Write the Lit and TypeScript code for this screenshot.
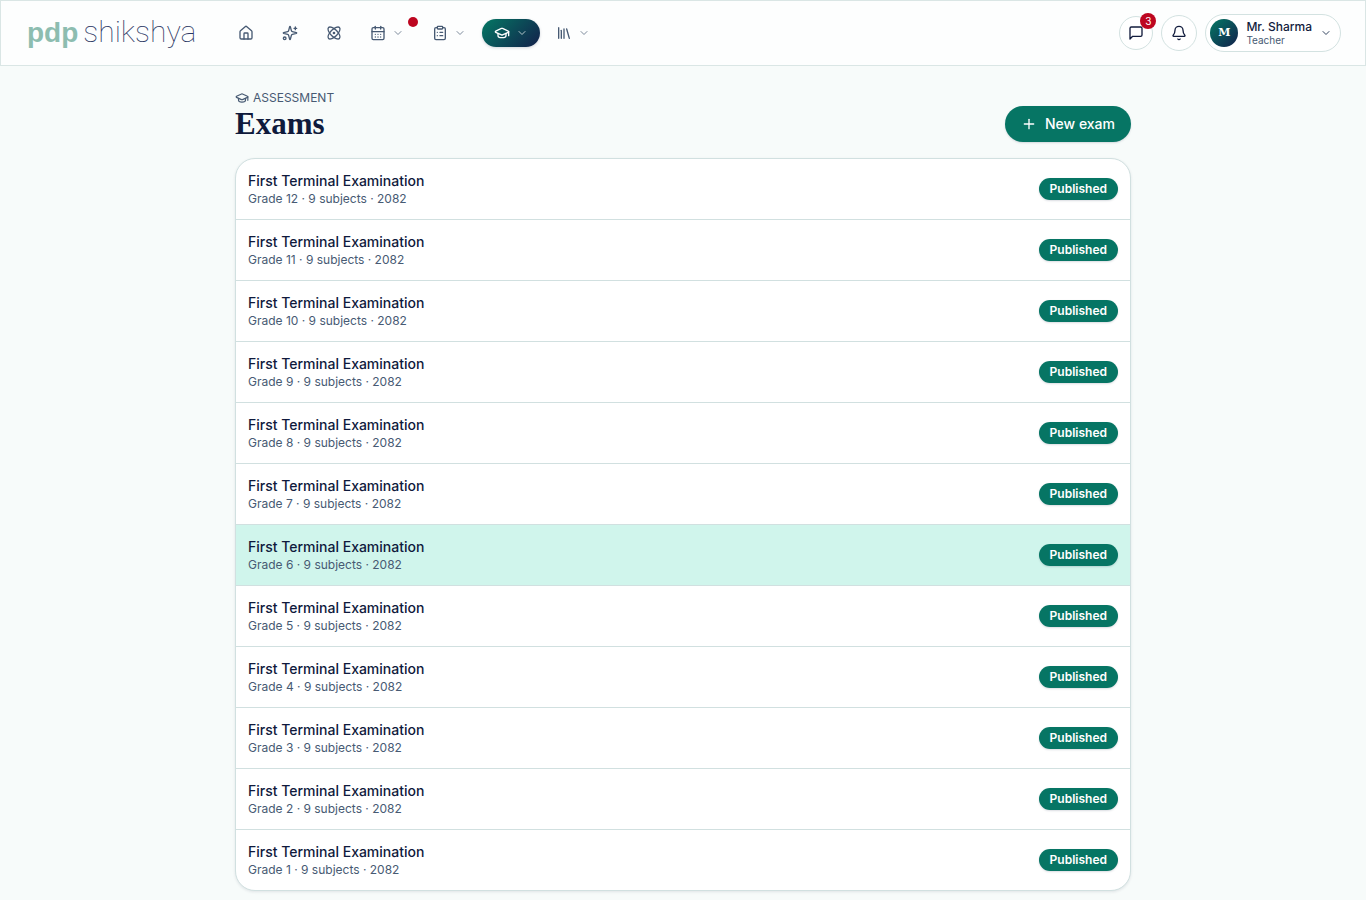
import { LitElement, html, css, svg, nothing, TemplateResult } from "lit";
import { customElement, property } from "lit/decorators.js";

const icons: Record<string, TemplateResult> = {
  home: svg`<path d="M15 21v-8a1 1 0 0 0-1-1h-4a1 1 0 0 0-1 1v8"/><path d="M3 10a2 2 0 0 1 .709-1.528l7-5.999a2 2 0 0 1 2.582 0l7 5.999A2 2 0 0 1 21 10v9a2 2 0 0 1-2 2H5a2 2 0 0 1-2-2z"/>`,
  sparkles: svg`<path d="M9.937 15.5A2 2 0 0 0 8.5 14.063l-6.135-1.582a.5.5 0 0 1 0-.962L8.5 9.936A2 2 0 0 0 9.937 8.5l1.582-6.135a.5.5 0 0 1 .963 0L14.063 8.5A2 2 0 0 0 15.5 9.937l6.135 1.581a.5.5 0 0 1 0 .964L15.5 14.063a2 2 0 0 0-1.437 1.437l-1.582 6.135a.5.5 0 0 1-.963 0z"/><path d="M20 3v4"/><path d="M22 5h-4"/><circle cx="4" cy="20" r="2"/>`,
  atom: svg`<circle cx="12" cy="12" r="1"/><path d="M20.2 20.2c2.04-2.03.02-7.36-4.5-11.9-4.54-4.52-9.87-6.54-11.9-4.5-2.04 2.03-.02 7.36 4.5 11.9 4.54 4.52 9.87 6.54 11.9 4.5Z"/><path d="M15.7 15.7c4.52-4.54 6.54-9.87 4.5-11.9-2.03-2.04-7.36-.02-11.9 4.5-4.52 4.54-6.54 9.87-4.5 11.9 2.03 2.04 7.36.02 11.9-4.5Z"/>`,
  calendar: svg`<path d="M8 2v4"/><path d="M16 2v4"/><rect width="18" height="18" x="3" y="4" rx="2"/><path d="M3 10h18"/><path d="M8 14h.01"/><path d="M12 14h.01"/><path d="M16 14h.01"/><path d="M8 18h.01"/><path d="M12 18h.01"/><path d="M16 18h.01"/>`,
  clipboard: svg`<rect width="8" height="4" x="8" y="2" rx="1" ry="1"/><path d="M16 4h2a2 2 0 0 1 2 2v14a2 2 0 0 1-2 2H6a2 2 0 0 1-2-2V6a2 2 0 0 1 2-2h2"/><path d="M12 11h4"/><path d="M12 16h4"/><path d="M8 11h.01"/><path d="M8 16h.01"/>`,
  cap: svg`<path d="M21.42 10.922a1 1 0 0 0-.019-1.838L12.83 5.18a2 2 0 0 0-1.66 0L2.6 9.08a1 1 0 0 0 0 1.832l8.57 3.908a2 2 0 0 0 1.66 0z"/><path d="M22 10v6"/><path d="M6 12.5V16a6 3 0 0 0 12 0v-3.5"/>`,
  library: svg`<path d="m16 6 4 14"/><path d="M12 6v14"/><path d="M8 8v12"/><path d="M4 4v16"/>`,
  message: svg`<path d="M21 15a2 2 0 0 1-2 2H7l-4 4V5a2 2 0 0 1 2-2h14a2 2 0 0 1 2 2z"/>`,
  bell: svg`<path d="M10.268 21a2 2 0 0 0 3.464 0"/><path d="M3.262 15.326A1 1 0 0 0 4 17h16a1 1 0 0 0 .74-1.673C19.41 13.956 18 12.499 18 8A6 6 0 0 0 6 8c0 4.499-1.411 5.956-2.738 7.326"/>`,
  chevron: svg`<path d="m6 9 6 6 6-6"/>`,
  plus: svg`<path d="M5 12h14"/><path d="M12 5v14"/>`,
};

const icon = (name: string, size = 16) => html`<svg
  width=${size} height=${size} viewBox="0 0 24 24" fill="none" stroke="currentColor"
  stroke-width="2" stroke-linecap="round" stroke-linejoin="round" aria-hidden="true"
>${icons[name]}</svg>`;

const shared = css`
  * { box-sizing: border-box; }
  svg { display: block; flex: none; }
  button { font: inherit; color: inherit; border: 0; background: none; padding: 0; cursor: pointer; }
  a { color: inherit; text-decoration: none; }
`;

interface NavItem { icon: string; label: string; menu?: boolean; active?: boolean; dot?: boolean; }

const NAV: NavItem[] = [
  { icon: "home", label: "Home" },
  { icon: "sparkles", label: "Assistant" },
  { icon: "atom", label: "Explore" },
  { icon: "calendar", label: "Calendar", menu: true, dot: true },
  { icon: "clipboard", label: "Assignments", menu: true },
  { icon: "cap", label: "Assessment", menu: true, active: true },
  { icon: "library", label: "Library", menu: true },
];

@customElement("top-bar")
class TopBar extends LitElement {
  static styles = [shared, css`
    :host { display: block; }
    .bar {
      display: flex; align-items: center; gap: 28px; height: 66px;
      padding: 0 24px; background: #fdfefe; border: 1px solid #dae6e5;
    }
    .logo { display: flex; align-items: baseline; gap: 5px; width: 173px; padding: 0 0 2px 2px; }
    .brand { font: bold 28px/36px "Liberation Sans", sans-serif; color: #8dbdb0; }
    .product { font: 100 30px/36px Roboto, sans-serif; color: #2b3763; }
    .nav { display: flex; gap: 4px; flex: 1; }
    .item {
      position: relative; display: flex; align-items: center; gap: 6px;
      height: 28px; padding: 0 12px; border-radius: 14px; color: #475a73;
    }
    .item .caret { opacity: .7; }
    .active {
      color: #fff; background: linear-gradient(135deg, #047864, #13204b);
      box-shadow: 0 1px 3px rgb(15 28 63 / .18);
    }
    .dot {
      position: absolute; top: -2px; right: -2px; width: 10px; height: 10px;
      border-radius: 50%; background: #bd0620;
    }
    .tools { display: flex; align-items: center; gap: 8px; color: #121c3d; }
    .round {
      position: relative; display: grid; place-items: center; width: 36px; height: 36px;
      border: 1px solid #d3e2e1; border-radius: 50%; background: #fff;
    }
    .small { width: 34px; height: 34px; }
    .count {
      position: absolute; top: -4px; right: -4px; width: 16px; height: 16px;
      border-radius: 50%; background: #bd0620; color: #fff;
      font-size: 10px; line-height: 16px; text-align: center;
    }
    .profile {
      display: flex; align-items: center; gap: 8px; height: 38px; padding: 0 8px 0 4px;
      border: 1px solid #d3e2e1; border-radius: 19px; background: #fff; text-align: left;
    }
    .avatar {
      width: 28px; height: 28px; border-radius: 50%; color: #fff; text-align: center;
      font: bold 11px/28px "DejaVu Serif", serif;
      background: linear-gradient(135deg, #047864, #13204b);
    }
    .name { display: block; font-size: 12px; line-height: 15px; font-weight: 500; }
    .role { display: block; font-size: 10px; line-height: 13px; color: #475a73; }
    .profile .caret { color: #33445f; }
  `];

  render() {
    return html`<header class="bar">
      <a class="logo" href="#"><span class="brand">pdp</span><span class="product">shikshya</span></a>
      <nav class="nav" aria-label="Main">
        ${NAV.map((n) => n.menu
          ? html`<button class="item ${n.active ? "active" : ""}" aria-label=${n.label} aria-haspopup="menu">
              ${icon(n.icon)}<span class="caret">${icon("chevron", 12)}</span>
              ${n.dot ? html`<span class="dot"></span>` : nothing}
            </button>`
          : html`<a class="item" href="#" aria-label=${n.label}>${icon(n.icon)}</a>`)}
      </nav>
      <div class="tools">
        <button class="round small" aria-label="Messages">${icon("message")}<span class="count">3</span></button>
        <button class="round" aria-label="Notifications">${icon("bell")}</button>
        <button class="profile" aria-haspopup="menu">
          <span class="avatar">M</span>
          <span><span class="name">Mr. Sharma</span><span class="role">Teacher</span></span>
          <span class="caret">${icon("chevron", 12)}</span>
        </button>
      </div>
    </header>`;
  }
}

@customElement("exam-row")
class ExamRow extends LitElement {
  @property({ type: Number }) grade = 0;
  @property({ type: Boolean }) highlighted = false;

  static styles = [shared, css`
    :host { display: block; }
    .row {
      display: flex; align-items: center; justify-content: space-between;
      gap: 12px; padding: 12px;
    }
    .row:hover, .highlighted { background: #d0f5ec; }
    .title { display: block; font-size: 14px; line-height: 20px; font-weight: 500; color: #0f1a3c; }
    .meta { display: block; font-size: 12px; line-height: 16px; color: #475a73; }
    .badge {
      padding: 3px 11px; border-radius: 11px; background: #067564; color: #fff;
      font-size: 12px; line-height: 16px; font-weight: 600;
      box-shadow: 0 1px 2px rgb(15 28 63 / .15);
    }
  `];

  render() {
    return html`<a class="row ${this.highlighted ? "highlighted" : ""}" href="#">
      <span>
        <span class="title">First Terminal Examination</span>
        <span class="meta">Grade ${this.grade} · 9 subjects · 2082</span>
      </span>
      <span class="badge">Published</span>
    </a>`;
  }
}

@customElement("app-root")
class AppRoot extends LitElement {
  static styles = [shared, css`
    :host {
      display: block; min-height: 100vh; background: #f7fbfa; color: #0f1a3c;
      font-family: Inter, "Liberation Sans", sans-serif;
    }
    .page { max-width: 896px; margin: 0 auto; padding: 24px 0 9px; }
    .head { display: flex; align-items: flex-end; justify-content: space-between; margin-bottom: 16px; }
    .eyebrow {
      display: flex; align-items: center; gap: 4px; margin: 0; color: #475a73;
      font-size: 12px; line-height: 16px; text-transform: uppercase;
    }
    .heading { margin: 0; font: bold 31px/36px "Liberation Serif", serif; }
    .new {
      display: flex; align-items: center; gap: 8px; height: 36px; padding: 0 16px;
      border-radius: 18px; background: #067564; color: #fff;
      font-size: 14px; line-height: 20px; font-weight: 500;
      box-shadow: 0 1px 2px rgb(15 28 63 / .15);
    }
    .list {
      margin: 0; padding: 0; list-style: none; overflow: hidden; background: #fff;
      border: 1px solid #d1e0e0; border-radius: 20px;
      box-shadow: 0 1px 3px rgb(15 28 63 / .1);
    }
    .entry + .entry { border-top: 1px solid #d1e0e0; }
  `];

  render() {
    const grades = Array.from({ length: 12 }, (_, i) => 12 - i);
    return html`
      <top-bar></top-bar>
      <main class="page">
        <div class="head">
          <div>
            <p class="eyebrow">${icon("cap", 14)}<span>Assessment</span></p>
            <h1 class="heading">Exams</h1>
          </div>
          <button class="new">${icon("plus")}<span>New exam</span></button>
        </div>
        <ul class="list">
          ${grades.map((g) => html`<li class="entry"><exam-row .grade=${g} .highlighted=${g === 6}></exam-row></li>`)}
        </ul>
      </main>`;
  }
}
